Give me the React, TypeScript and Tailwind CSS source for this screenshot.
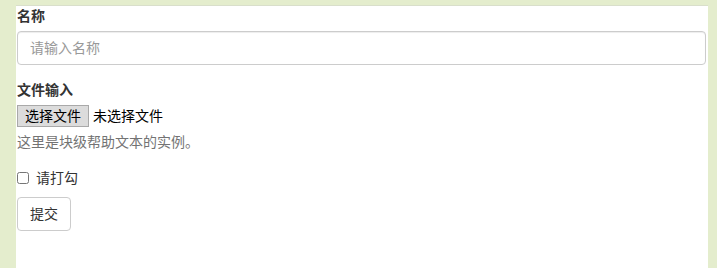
export default function App() {
  return (
    <div className="min-h-[268px] h-[268px] overflow-hidden bg-[#e4edcd] pl-4 pr-[9px] pt-[5px] font-['Liberation_Sans','Noto_Sans_CJK_SC',sans-serif] text-[14px] leading-[20px] text-[#333]">
      <div className="h-full border-t border-[#d9dfcb] bg-white pl-px pr-[2px]">
        <form className="flex flex-col">
          <label className="font-bold">名称</label>
          <input
            type="text"
            placeholder="请输入名称"
            className="mt-[5px] h-[34px] w-full rounded-[4px] border border-[#ccc] px-3 text-[14px] text-[#555] shadow-[inset_0_1px_1px_rgba(0,0,0,0.075)] placeholder:text-[#999] outline-none"
          />
          <label className="mt-[15px] font-bold">文件输入</label>
          <div className="mt-[5px] flex items-center">
            <span className="h-[22px] border border-[#a9a9a9] bg-[#dcdcdc] px-[7px] text-[14px] leading-[20px] text-black">
              选择文件
            </span>
            <span className="ml-[4px] text-black">未选择文件</span>
          </div>
          <p className="mt-[5px] text-[#737373]">这里是块级帮助文本的实例。</p>
          <div className="mt-[16px] flex items-center">
            <input type="checkbox" className="h-[12px] w-[12px] accent-gray-300" />
            <span className="ml-[7px]">请打勾</span>
          </div>
          <div className="mt-[9px]">
            <button
              type="button"
              className="h-[34px] w-[54px] rounded-[4px] border border-[#ccc] bg-white text-[14px] text-[#333]"
            >
              提交
            </button>
          </div>
        </form>
      </div>
    </div>
  );
}
